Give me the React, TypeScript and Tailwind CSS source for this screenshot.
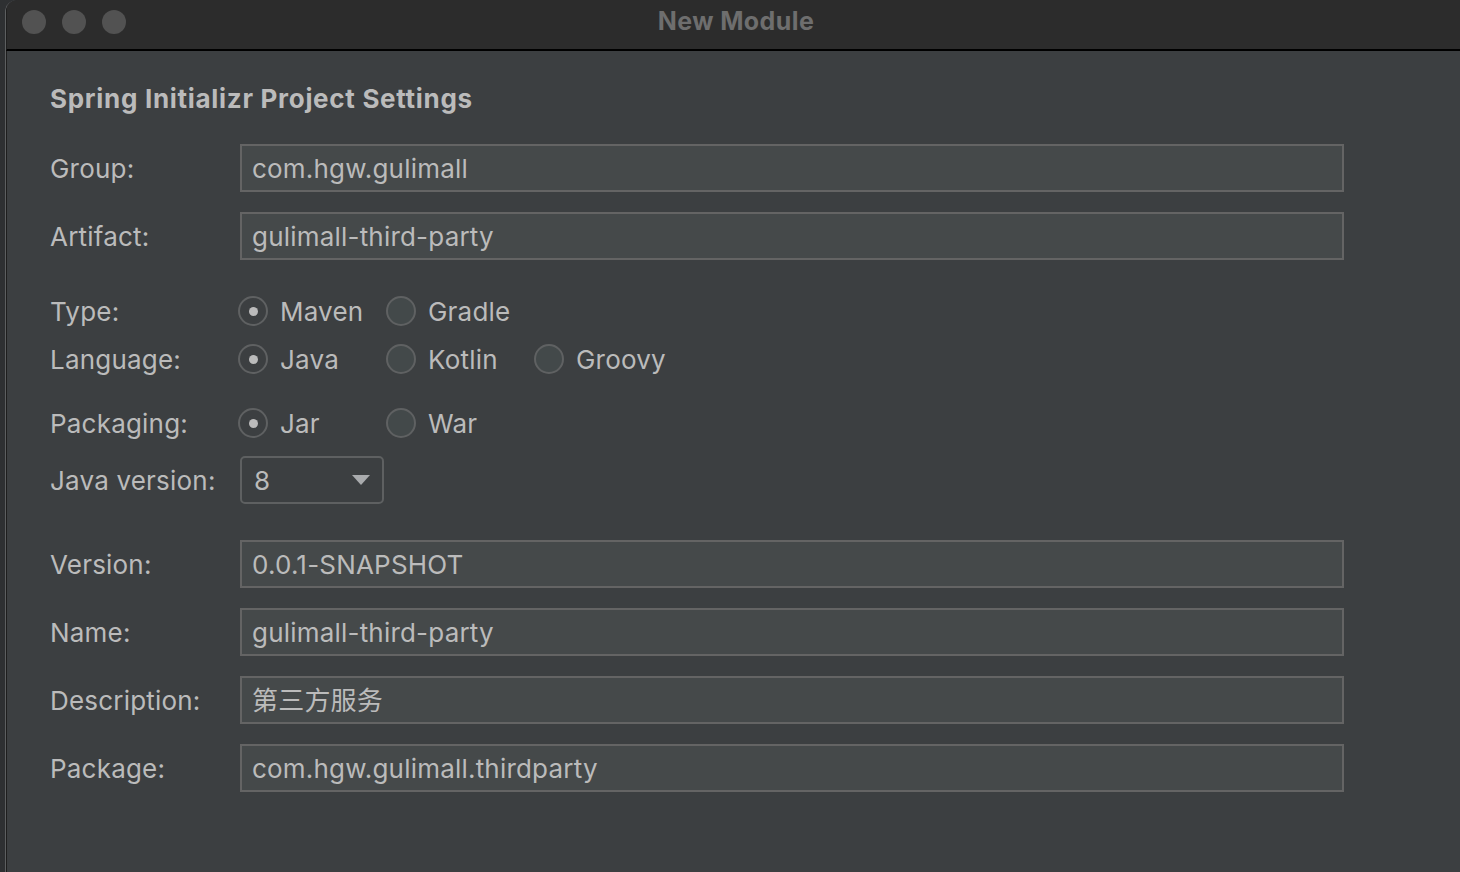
import React from 'react'

const font = { fontFamily: 'Inter, "Noto Sans CJK SC", sans-serif' }

interface FieldProps {
  label: string
  value: string
  className?: string
}

function TextField({ label, value, className = '' }: FieldProps): React.JSX.Element {
  return (
    <div className={`flex h-[48px] items-center ${className}`}>
      <span className="w-[190px] shrink-0 pt-[1px]">{label}</span>
      <div className="flex h-[48px] w-[1104px] items-center border-2 border-[#646464] bg-[#45494a] px-[10px] pt-[1px] text-[#bbbbbb]">
        {value}
      </div>
    </div>
  )
}

function Radio({ label, checked = false }: { label: string; checked?: boolean }): React.JSX.Element {
  return (
    <div className="flex w-[148px] items-center">
      <span
        className={`flex h-[30px] w-[30px] shrink-0 items-center justify-center rounded-full border-2 border-[#5f6162] ${
          checked ? 'bg-[#3c3f41]' : 'bg-[#43494a]'
        }`}
      >
        {checked && <span className="h-[9px] w-[9px] rounded-full bg-[#bbbbbb]" />}
      </span>
      <span className="ml-[12px] pt-[1px]">{label}</span>
    </div>
  )
}

interface RadioRowProps {
  label: string
  options: string[]
  className?: string
}

function RadioRow({ label, options, className = '' }: RadioRowProps): React.JSX.Element {
  return (
    <div className={`flex h-[48px] items-center ${className}`}>
      <span className="w-[188px] shrink-0 pt-[1px]">{label}</span>
      {options.map((o, i) => (
        <Radio key={o} label={o} checked={i === 0} />
      ))}
    </div>
  )
}

export default function App(): React.JSX.Element {
  return (
    <div className="h-[872px] w-[1460px] overflow-hidden bg-[#2e3032] pl-[5px]" style={font}>
      <div className="flex h-full w-[1470px] flex-col overflow-hidden rounded-t-[12px] border-l border-[#5d5f60]">
        {/* Title bar */}
        <div className="relative flex h-[51px] shrink-0 items-center justify-center border-b-2 border-l border-b-black border-l-[#1e1e1e] bg-[#2c2c2c] pb-[6px]">
          <div className="absolute left-[15px] top-[10px] flex gap-[16px]">
            <span className="h-[24px] w-[24px] rounded-full bg-[#525252]" />
            <span className="h-[24px] w-[24px] rounded-full bg-[#525252]" />
            <span className="h-[24px] w-[24px] rounded-full bg-[#525252]" />
          </div>
          <span className="-ml-[10px] text-[25px] font-bold tracking-[0.4px] text-[#6e6e6e]">New Module</span>
        </div>

        {/* Body */}
        <div className="flex flex-1 flex-col border-l border-l-[#1e1e1e] bg-[#3c3f41] pl-[43px] text-[26px] tracking-[0.2px] text-[#bbbbbb]">
          <div className="mt-[32px] h-[32px] text-[26px] font-bold leading-[32px] tracking-[0.7px] text-[#bbbbbb]">
            Spring Initializr Project Settings
          </div>

          <TextField label="Group:" value="com.hgw.gulimall" className="mt-[29px]" />
          <TextField label="Artifact:" value="gulimall-third-party" className="mt-[20px]" />

          <RadioRow label="Type:" options={['Maven', 'Gradle']} className="mt-[27px]" />
          <RadioRow label="Language:" options={['Java', 'Kotlin', 'Groovy']} />
          <RadioRow label="Packaging:" options={['Jar', 'War']} className="mt-[16px]" />

          <div className="mt-[9px] flex h-[48px] items-center">
            <span className="w-[190px] shrink-0 pt-[1px]">Java version:</span>
            <div className="flex h-[48px] w-[144px] items-center justify-between rounded-[5px] border-2 border-[#5e6061] bg-[#3c3f41] pl-[12px] pr-[12px]">
              <span className="pt-[1px]">8</span>
              <svg width="18" height="10" viewBox="0 0 18 10">
                <path d="M0 0 L18 0 L9 10 Z" fill="#a9abad" />
              </svg>
            </div>
          </div>

          <TextField label="Version:" value="0.0.1-SNAPSHOT" className="mt-[36px]" />
          <TextField label="Name:" value="gulimall-third-party" className="mt-[20px]" />
          <TextField label="Description:" value="第三方服务" className="mt-[20px]" />
          <TextField label="Package:" value="com.hgw.gulimall.thirdparty" className="mt-[20px]" />
        </div>
      </div>
    </div>
  )
}
